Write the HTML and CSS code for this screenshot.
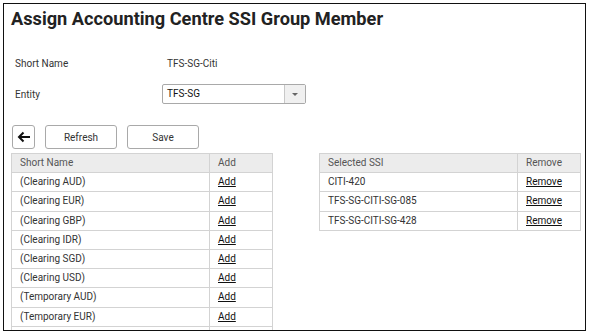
FILE: index.html
```html
<!DOCTYPE html>
<html lang="en">

    <head>
        <meta charset="UTF-8">
        <meta name="viewport" content="width=device-width, initial-scale=1.0">
        <title>Assign Accounting Centre SSI Group Member</title>
        <link rel="stylesheet" href="styles.css">
    </head>

    <body>
        <div class="frame">
            <h1>Assign Accounting Centre SSI Group Member</h1>

            <div class="form">
                <div class="form-row">
                    <span class="form-label">Short Name</span>
                    <span class="form-value">TFS-SG-Citi</span>
                </div>
                <div class="form-row">
                    <span class="form-label">Entity</span>
                    <div class="select">
                        <span class="select-text">TFS-SG</span>
                        <span class="select-arrow"></span>
                    </div>
                </div>
            </div>

            <div class="toolbar">
                <button class="back-button" title="Back">
                    <svg width="14" height="12" viewBox="0 0 14 12">
                        <path d="M13 6H2M6.5 1.5L2 6l4.5 4.5" fill="none" stroke="#111" stroke-width="2"/>
                    </svg>
                </button>
                <button class="btn">Refresh</button>
                <button class="btn">Save</button>
            </div>

            <div class="tables">
                <table class="grid">
                    <thead>
                        <tr><th>Short Name</th><th class="action-col">Add</th></tr>
                    </thead>
                    <tbody>
                        <tr><td>(Clearing AUD)</td><td><a href="#">Add</a></td></tr>
                        <tr><td>(Clearing EUR)</td><td><a href="#">Add</a></td></tr>
                        <tr><td>(Clearing GBP)</td><td><a href="#">Add</a></td></tr>
                        <tr><td>(Clearing IDR)</td><td><a href="#">Add</a></td></tr>
                        <tr><td>(Clearing SGD)</td><td><a href="#">Add</a></td></tr>
                        <tr><td>(Clearing USD)</td><td><a href="#">Add</a></td></tr>
                        <tr><td>(Temporary AUD)</td><td><a href="#">Add</a></td></tr>
                        <tr><td>(Temporary EUR)</td><td><a href="#">Add</a></td></tr>
                        <tr><td></td><td></td></tr>
                    </tbody>
                </table>

                <table class="grid">
                    <thead>
                        <tr><th>Selected SSI</th><th class="action-col">Remove</th></tr>
                    </thead>
                    <tbody>
                        <tr><td>CITI-420</td><td><a href="#">Remove</a></td></tr>
                        <tr><td>TFS-SG-CITI-SG-085</td><td><a href="#">Remove</a></td></tr>
                        <tr><td>TFS-SG-CITI-SG-428</td><td><a href="#">Remove</a></td></tr>
                    </tbody>
                </table>
            </div>
        </div>
    </body>

</html>
```

FILE: styles.css
```css
body {
    margin: 0;
    background: white;
    font-family: Roboto, Arial, sans-serif;
    font-size: 10px;
    color: #333;
}

.frame {
    box-sizing: border-box;
    width: 583px;
    height: 328px;
    margin: 3px;
    border: 1px solid #111;
    overflow: hidden;
    padding: 0 0 0 7px;
}

h1 {
    margin: 4px 0 0;
    font-size: 18.2px;
    line-height: 22px;
    font-weight: bold;
    color: #222;
}

.form {
    margin-top: 23px;
    padding-left: 4px;
    display: flex;
    flex-direction: column;
    gap: 11px;
}

.form-row {
    display: flex;
    align-items: center;
    height: 20px;
}

.form-label {
    width: 147px;
}

.form-value {
    padding-left: 5px;
}

.select {
    display: flex;
    width: 144px;
    height: 20px;
    box-sizing: border-box;
    border: 1px solid #a9a9a9;
    border-radius: 2px;
    color: #111;
}

.select-text {
    flex: 1;
    padding-left: 4px;
    line-height: 18px;
}

.select-arrow {
    width: 20px;
    border-left: 1px solid #c8c8c8;
    background: #f0f0f0;
    position: relative;
}

.select-arrow::after {
    content: '';
    position: absolute;
    left: 7px;
    top: 8px;
    border-left: 3px solid transparent;
    border-right: 3px solid transparent;
    border-top: 3px solid #666;
}

.toolbar {
    display: flex;
    gap: 10px;
    margin-top: 21px;
    padding-left: 1px;
}

.toolbar button {
    box-sizing: border-box;
    height: 24px;
    background: white;
    border: 1px solid #a9a9a9;
    border-radius: 3px;
    font-family: Roboto, Arial, sans-serif;
    font-size: 10px;
    color: #333;
    padding: 0;
}

.back-button {
    width: 23px;
    display: flex;
    align-items: center;
    justify-content: center;
}

.btn {
    width: 72px;
}

.tables {
    display: flex;
    align-items: flex-start;
    gap: 46px;
    margin-top: 4px;
}

.grid {
    border-collapse: collapse;
    width: 262px;
    flex-shrink: 0;
}

.grid th,
.grid td {
    border: 1px solid #d3d3d3;
    height: 18.2px;
    line-height: 18.2px;
    padding: 0 0 0 8px;
    text-align: left;
    white-space: nowrap;
}

.grid th {
    background: #ececec;
    font-weight: normal;
    color: #555;
}

.grid .action-col {
    width: 54px;
}

.grid a {
    color: #111;
    text-decoration: underline;
}
```
